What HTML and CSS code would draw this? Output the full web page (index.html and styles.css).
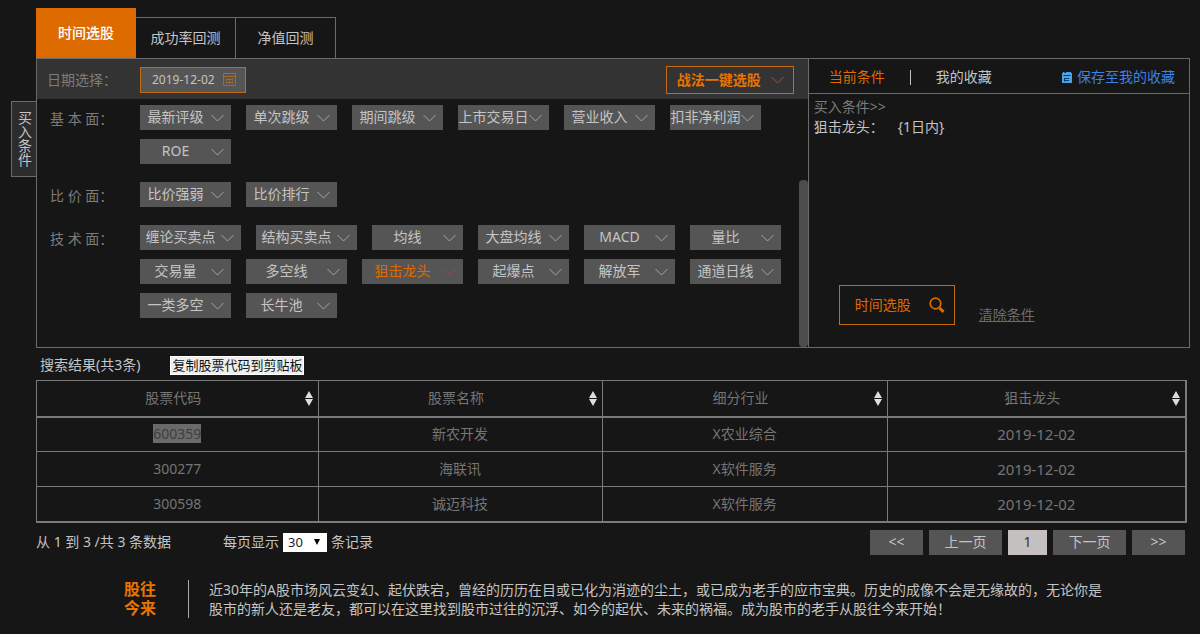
FILE: index.html
```html
<!DOCTYPE html>
<html lang="zh-CN">
<head>
<meta charset="utf-8">
<title>时间选股</title>
<link rel="stylesheet" href="styles.css">
</head>
<body>
<svg class="defs" aria-hidden="true">
  <symbol id="chev" viewBox="0 0 13 8"><path d="M.5 1 6.5 7 12.5 1" fill="none" stroke="currentColor"/></symbol>
  <symbol id="sort" viewBox="0 0 8 15"><path d="M4 0 8 7H0zM0 8h8L4 15z" fill="currentColor"/></symbol>
</svg>

<nav class="tabs">
  <button class="tab active">时间选股</button>
  <button class="tab">成功率回测</button>
  <button class="tab">净值回测</button>
</nav>

<main class="stage">
  <button class="side-tab"><span>买入条件</span></button>
  <div class="panel">
    <section class="filters">
      <div class="date-bar">
        <label class="bar-label" for="date">日期选择：</label>
        <div class="date-box">
          <input id="date" class="date-input" type="text" value="2019-12-02">
          <svg class="calendar" viewBox="0 0 13 13"><path d="M.5.500h12v12H.5zM.5 3.500h12M3 6.500h7M3 9.500h7" fill="none" stroke="currentColor"/><path d="M3.500 5v6M6.500 5v6M9.500 5v6" stroke="currentColor" stroke-opacity=".6"/></svg>
        </div>
        <button class="quick">战法一键选股<svg class="chev"><use href="#chev"/></svg></button>
      </div>
      <div class="groups">
        <div class="group">
          <span class="group-label">基 本 面：</span>
          <div class="options">
            <button class="opt"><span>最新评级</span><svg class="chev"><use href="#chev"/></svg></button>
            <button class="opt"><span>单次跳级</span><svg class="chev"><use href="#chev"/></svg></button>
            <button class="opt"><span>期间跳级</span><svg class="chev"><use href="#chev"/></svg></button>
            <button class="opt"><span>上市交易日</span><svg class="chev"><use href="#chev"/></svg></button>
            <button class="opt"><span>营业收入</span><svg class="chev"><use href="#chev"/></svg></button>
            <button class="opt"><span>扣非净利润</span><svg class="chev"><use href="#chev"/></svg></button>
            <button class="opt"><span>ROE</span><svg class="chev"><use href="#chev"/></svg></button>
          </div>
        </div>
        <div class="group">
          <span class="group-label">比 价 面：</span>
          <div class="options">
            <button class="opt"><span>比价强弱</span><svg class="chev"><use href="#chev"/></svg></button>
            <button class="opt"><span>比价排行</span><svg class="chev"><use href="#chev"/></svg></button>
          </div>
        </div>
        <div class="group">
          <span class="group-label">技 术 面：</span>
          <div class="options">
            <button class="opt wide"><span>缠论买卖点</span><svg class="chev"><use href="#chev"/></svg></button>
            <button class="opt wide"><span>结构买卖点</span><svg class="chev"><use href="#chev"/></svg></button>
            <button class="opt"><span>均线</span><svg class="chev"><use href="#chev"/></svg></button>
            <button class="opt"><span>大盘均线</span><svg class="chev"><use href="#chev"/></svg></button>
            <button class="opt"><span>MACD</span><svg class="chev"><use href="#chev"/></svg></button>
            <button class="opt"><span>量比</span><svg class="chev"><use href="#chev"/></svg></button>
            <button class="opt"><span>交易量</span><svg class="chev"><use href="#chev"/></svg></button>
            <button class="opt wide"><span>多空线</span><svg class="chev"><use href="#chev"/></svg></button>
            <button class="opt wide selected"><span>狙击龙头</span><svg class="chev"><use href="#chev"/></svg></button>
            <button class="opt"><span>起爆点</span><svg class="chev"><use href="#chev"/></svg></button>
            <button class="opt"><span>解放军</span><svg class="chev"><use href="#chev"/></svg></button>
            <button class="opt"><span>通道日线</span><svg class="chev"><use href="#chev"/></svg></button>
            <button class="opt"><span>一类多空</span><svg class="chev"><use href="#chev"/></svg></button>
            <button class="opt"><span>长牛池</span><svg class="chev"><use href="#chev"/></svg></button>
          </div>
        </div>
      </div>
      <div class="scroll-thumb"></div>
    </section>

    <section class="conditions">
      <header class="cond-head">
        <button class="link-btn current">当前条件</button>
        <span class="bar"></span>
        <button class="link-btn">我的收藏</button>
        <button class="link-btn save"><svg class="disk" viewBox="0 0 10 11"><path d="M0 1h10v10H0z" fill="#4aa3e8"/><path d="M1 0h1.500v2H1zM4 0h5v2H4z" fill="#4aa3e8"/><path d="M1.500 3.500h7M3 6.500h4M3 8.500h4M2.500 6v3.500" fill="none" stroke="#143a66"/></svg>保存至我的收藏</button>
      </header>
      <div class="cond-body">
        <div class="cond-title">买入条件&gt;&gt;</div>
        <div class="cond-line"><span>狙击龙头：</span><span>{1日内}</span></div>
      </div>
      <div class="cond-actions">
        <button class="run">时间选股<svg class="search" viewBox="0 0 16 16"><circle cx="6.500" cy="6.500" r="5.300" fill="none" stroke="currentColor" stroke-width="1.700"/><path d="M10.500 11 14.500 14.800" stroke="currentColor" stroke-width="3"/></svg></button>
        <a class="clear" href="#">清除条件</a>
      </div>
    </section>
  </div>
</main>

<section class="results">
  <div class="results-head">
    <span>搜索结果(共3条)</span>
    <button class="copy">复制股票代码到剪贴板</button>
  </div>
  <table class="grid">
    <colgroup><col class="c1"><col class="c2"><col class="c3"><col class="c4"></colgroup>
    <thead>
      <tr>
        <th><div class="th"><span>股票代码</span><svg class="sort"><use href="#sort"/></svg></div></th>
        <th><div class="th"><span>股票名称</span><svg class="sort"><use href="#sort"/></svg></div></th>
        <th><div class="th"><span>细分行业</span><svg class="sort"><use href="#sort"/></svg></div></th>
        <th><div class="th"><span>狙击龙头</span><svg class="sort"><use href="#sort"/></svg></div></th>
      </tr>
    </thead>
    <tbody>
      <tr><td><span class="marked">600359</span></td><td>新农开发</td><td>X农业综合</td><td class="date">2019-12-02</td></tr>
      <tr><td>300277</td><td>海联讯</td><td>X软件服务</td><td class="date">2019-12-02</td></tr>
      <tr><td>300598</td><td>诚迈科技</td><td>X软件服务</td><td class="date">2019-12-02</td></tr>
    </tbody>
  </table>
  <div class="pager">
    <span class="summary">从 1 到 3 /共 3 条数据</span>
    <div class="page-size">
      <label for="size">每页显示</label>
      <span class="select-wrap">
        <select id="size" class="size"><option>30</option><option>50</option></select>
        <svg class="caret" viewBox="0 0 6 6"><path d="M0 0h6L3 6z"/></svg>
      </span>
      <span>条记录</span>
    </div>
    <div class="pages">
      <button class="page short">&lt;&lt;</button>
      <button class="page">上一页</button>
      <button class="page on">1</button>
      <button class="page">下一页</button>
      <button class="page short">&gt;&gt;</button>
    </div>
  </div>
</section>

<footer class="foot">
  <strong class="brand">股往<br>今来</strong>
  <p class="intro">近30年的A股市场风云变幻、起伏跌宕，曾经的历历在目或已化为消迹的尘土，或已成为老手的应市宝典。历史的成像不会是无缘故的，无论你是股市的新人还是老友，都可以在这里找到股市过往的沉浮、如今的起伏、未来的祸福。成为股市的老手从股往今来开始！</p>
</footer>
</body>
</html>
```
FILE: styles.css
```css
* { box-sizing: border-box; }

body {
  margin: 0;
  padding: 8px 10px 0 11px;
  background: #161616;
  color: #c4c4c4;
  font: 14px/20px "Noto Sans", "Noto Sans CJK SC", sans-serif;
}

button, input, select {
  margin: 0;
  padding: 0;
  border: 0;
  border-radius: 0;
  background: none;
  color: inherit;
  font: inherit;
  white-space: nowrap;
}

button { cursor: pointer; }
svg { flex: none; }
.defs { position: absolute; width: 0; height: 0; }

/* tabs */
.tabs { display: flex; align-items: flex-end; padding-left: 25px; }
.tab {
  width: 100px;
  height: 41px;
  border: 1px solid #6a6a6a;
  border-width: 1px 1px 0 0;
}
.tab.active { height: 50px; border: 0; background: #dd6b00; color: #fff; font-weight: 500; }

/* main panel */
.stage { display: flex; align-items: flex-start; }
.side-tab {
  display: flex;
  justify-content: center;
  width: 25px;
  margin-top: 43px;
  padding: 9px 0;
  border: 1px solid #6a6a6a;
  border-right: 0;
  background: #2c2c2e;
}
.side-tab span { writing-mode: vertical-rl; }
.panel {
  flex: 1;
  display: grid;
  grid-template-columns: 669fr 331fr;
  min-height: 290px;
  border: 1px solid #6a6a6a;
}
.filters { position: relative; }
.date-bar {
  display: flex;
  align-items: center;
  height: 40px;
  padding: 1px 14px 0 10px;
  background: #333;
}
.bar-label { width: 93px; color: #7c7c7c; }
.date-box {
  display: flex;
  align-items: center;
  width: 106px;
  height: 26px;
  padding: 0 9px 0 11px;
  border: 1px solid #c46a10;
  background: #555;
}
.date-input { flex: 1; min-width: 0; font-size: 12px; }
.calendar { width: 13px; height: 13px; color: #a8682a; }
.quick {
  display: flex;
  align-items: center;
  justify-content: space-between;
  width: 128px;
  height: 28px;
  margin-left: auto;
  padding: 0 9px 0 10px;
  border: 1px solid #c46a10;
  color: #e87400;
  font-weight: 700;
}
.quick .chev { color: #a05540; }
.chev { width: 13px; height: 8px; color: #a4a4a4; }

.groups { display: grid; gap: 18px; padding: 6px 14px 29px 13px; }
.group { display: flex; }
.group-label { width: 90px; padding-top: 4px; color: #7c7c7c; }
.options { flex: 1; display: flex; flex-wrap: wrap; gap: 9px 15px; }
.opt {
  display: flex;
  align-items: center;
  width: 91px;
  height: 25px;
  padding-right: 7px;
  background: #555;
}
.opt span { flex: 1; padding-bottom: 2px; text-align: center; }
.opt.wide { width: 101px; }
.opt.selected { color: #dd6b00; }
.opt.selected .chev { color: #b84038; }
.scroll-thumb {
  position: absolute;
  right: 0;
  bottom: 0;
  width: 9px;
  height: 167px;
  border-radius: 4px;
  background: #4d4d4d;
}

/* conditions */
.conditions { display: flex; flex-direction: column; border-left: 1px solid #6a6a6a; }
.cond-head {
  display: flex;
  align-items: center;
  height: 35px;
  padding: 2px 14px 0 20px;
  border-bottom: 1px solid #6a6a6a;
}
.current { color: #dd6b00; }
.bar { width: 1px; height: 15px; margin: 0 25px; background: #c4c4c4; }
.save { display: flex; align-items: center; gap: 5px; margin-left: auto; color: #3a82e6; }
.disk { width: 10px; height: 11px; }
.cond-body { flex: 1; padding: 3px 5px; }
.cond-title { color: #7c7c7c; }
.cond-line { display: flex; gap: 14px; }
.cond-actions { display: flex; align-items: flex-end; gap: 24px; padding: 0 30px 22px; }
.run {
  display: flex;
  align-items: center;
  gap: 18px;
  height: 40px;
  padding: 0 9px 0 15px;
  border: 1px solid #c46a10;
  color: #dd6b00;
}
.search { width: 16px; height: 16px; }
.clear { color: #6c6c6c; text-decoration: underline; }

/* results */
.results { padding: 7px 3px 0 25px; }
.results-head { display: flex; align-items: center; gap: 30px; height: 25px; padding: 0 4px 5px; }
.copy {
  height: 19px;
  padding: 0 1px;
  border: 1px solid #fff;
  background: #eee;
  color: #111;
  font-size: 13px;
  line-height: 17px;
}
.grid {
  width: 100%;
  border-collapse: collapse;
  table-layout: fixed;
  border: 1px solid #7a7a7a;
  border-right-width: 2px;
  border-bottom-width: 2px;
  color: #757575;
  text-align: center;
}
.c1 { width: 24.5%; }
.c2 { width: 24.7%; }
.c3 { width: 24.8%; }
.c4 { width: 26%; }
.grid th, .grid td { border-right: 1px solid #7a7a7a; font-weight: 400; }
.grid th { height: 36px; padding: 0 5px; border-bottom: 2px solid #7a7a7a; }
.grid td { height: 35px; padding: 0; border-bottom: 1px solid #7a7a7a; }
.th { display: flex; align-items: center; }
.th span { flex: 1; }
.sort { width: 8px; height: 15px; color: #ddd; }
.grid .date { font-size: 15px; }
.marked { background: #6a6a6a; color: #3e3e3e; }

.pager { display: flex; align-items: center; padding: 7px 2px 0 0; }
.summary { width: 187px; }
.page-size { display: flex; align-items: center; gap: 4px; }
.select-wrap { position: relative; display: flex; }
.size {
  width: 44px;
  height: 19px;
  padding-left: 5px;
  appearance: none;
  background: #fff;
  color: #222;
  font-size: 13px;
  line-height: 17px;
}
.caret { position: absolute; right: 7px; top: 6px; width: 6px; height: 6px; pointer-events: none; }
.pages { display: flex; gap: 6px; margin-left: auto; }
.page { width: 73px; height: 25px; background: #555; }
.page.short { width: 53px; }
.page.on { width: 39px; background: #c4c0c0; color: #333; }

/* footer */
.foot { display: flex; padding: 25px 80px 16px 113px; line-height: 19px; }
.brand { width: 64px; color: #e87400; font-size: 16px; }
.intro { flex: 1; margin: 0; padding-left: 20px; border-left: 1px solid #aaa; }
```
